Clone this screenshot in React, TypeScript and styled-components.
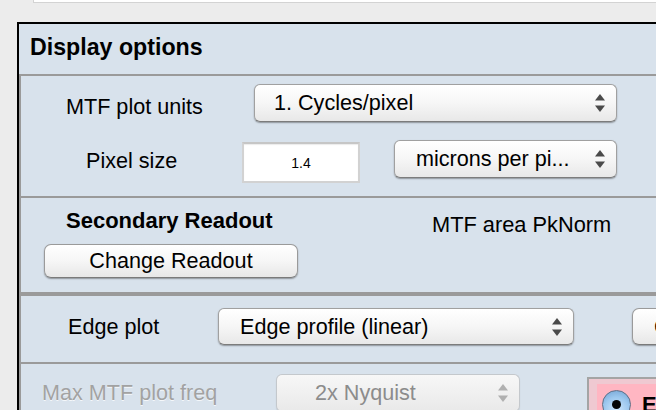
import React from "react";
import styled, { createGlobalStyle } from "styled-components";

const GlobalStyle = createGlobalStyle`
  html, body { margin: 0; padding: 0; background: #ececec; overflow: hidden; }
  body { font-family: "Liberation Sans", Arial, Helvetica, sans-serif; color: #000; }
`;

const Page = styled.div`
  width: 656px;
  height: 410px;
  overflow: hidden;
  background: #ececec;
  display: flex;
  flex-direction: column;
`;

const TopBox = styled.div`
  flex-shrink: 0;
  margin-left: 33px;
  width: 700px;
  height: 2px;
  background: #ffffff;
  border-left: 1px solid #d3d3d3;
  border-bottom: 1px solid #d3d3d3;
`;

const Panel = styled.div`
  flex: 1;
  margin-top: 19px;
  margin-left: 17px;
  width: 700px;
  background: #d8e2ec;
  border-top: 2px solid #000;
  border-left: 2px solid #000;
  display: flex;
  flex-direction: column;
`;

const TitleBar = styled.div`
  box-sizing: border-box;
  height: 50px;
  padding: 10px 0 0 11px;
  font-size: 23.2px;
  line-height: 26px;
  font-weight: bold;
`;

const Sections = styled.div`
  flex: 1;
  border-left: 2px solid #9a9a9a;
  display: flex;
  flex-direction: column;
`;

const Section = styled.div<{ $top: number; $h?: number }>`
  border-top: ${(p) => p.$top}px solid #9a9a9a;
  ${(p) => (p.$h ? `height: ${p.$h}px;` : "flex: 1;")}
  display: flex;
  flex-direction: column;
`;

const Row = styled.div<{ $mt: number; $h: number; $align?: string }>`
  display: flex;
  align-items: ${(p) => p.$align || "center"};
  margin-top: ${(p) => p.$mt}px;
  height: ${(p) => p.$h}px;
  flex-shrink: 0;
`;

const Label = styled.div<{ $w: number; $pl: number; $mt?: number; $disabled?: boolean }>`
  box-sizing: border-box;
  flex-shrink: 0;
  width: ${(p) => p.$w}px;
  padding-left: ${(p) => p.$pl}px;
  ${(p) => (p.$mt !== undefined ? `align-self: flex-start; margin-top: ${p.$mt}px;` : "")}
  font-size: 21.6px;
  line-height: 24px;
  white-space: nowrap;
  color: ${(p) => (p.$disabled ? "#a2a2a2" : "#000")};
  text-shadow: ${(p) => (p.$disabled ? "0 1px 0 #f4f7fa" : "none")};
`;

const PopupBox = styled.div<{ $w: number; $h: number; $pl: number; $disabled?: boolean; $ml?: number; $mt?: number }>`
  box-sizing: border-box;
  flex-shrink: 0;
  width: ${(p) => p.$w}px;
  height: ${(p) => p.$h}px;
  margin-left: ${(p) => p.$ml || 0}px;
  ${(p) => (p.$mt !== undefined ? `align-self: flex-start; margin-top: ${p.$mt}px;` : "")}
  display: flex;
  align-items: center;
  padding-left: ${(p) => p.$pl}px;
  padding-right: 11px;
  border: 1px solid ${(p) => (p.$disabled ? "#c4c8cc" : "#a0a0a0")};
  border-bottom-color: ${(p) => (p.$disabled ? "#b8bcc0" : "#7c7c7c")};
  border-radius: 6px;
  background: ${(p) =>
    p.$disabled
      ? "linear-gradient(#f7f7f7, #f0f0f0 50%, #e9e9e9)"
      : "linear-gradient(#ffffff, #f6f6f6 50%, #e8e8e8)"};
  box-shadow: ${(p) => (p.$disabled ? "0 1px 1px rgba(0,0,0,0.12)" : "0 1px 1.5px rgba(0,0,0,0.35)")};
  font-size: 21.6px;
  line-height: 24px;
  color: ${(p) => (p.$disabled ? "#8c8c8c" : "#000")};
  white-space: nowrap;
  overflow: hidden;
`;

const PopupText = styled.span`
  flex: 1;
  overflow: hidden;
`;

const Arrows = styled.svg`
  flex-shrink: 0;
  display: block;
`;

const NumberField = styled.input`
  box-sizing: border-box;
  flex-shrink: 0;
  align-self: flex-start;
  margin-top: 2px;
  width: 118px;
  height: 41px;
  background: #ffffff;
  border: 2px solid #d2d2d2;
  border-top-color: #c6c6c6;
  box-shadow: inset 0 1px 1px rgba(0, 0, 0, 0.08);
  font-family: "Liberation Sans", Arial, sans-serif;
  font-size: 14px;
  text-align: center;
  color: #000;
  padding: 0;
  outline: none;
`;

const ReadoutHead = styled.div`
  display: flex;
  align-items: flex-start;
  height: 46px;
  flex-shrink: 0;
`;

const BoldLabel = styled.div`
  box-sizing: border-box;
  width: 411px;
  padding-left: 45px;
  margin-top: 10px;
  font-size: 22px;
  line-height: 25px;
  font-weight: bold;
  white-space: nowrap;
`;

const ReadoutValue = styled.div`
  margin-top: 15px;
  font-size: 21.8px;
  line-height: 24px;
  white-space: nowrap;
`;

const PushButton = styled.div<{ $w: number; $h: number; $ml: number; $pl?: number }>`
  box-sizing: border-box;
  flex-shrink: 0;
  width: ${(p) => p.$w}px;
  height: ${(p) => p.$h}px;
  margin-left: ${(p) => p.$ml}px;
  display: flex;
  align-items: center;
  justify-content: ${(p) => (p.$pl !== undefined ? "flex-start" : "center")};
  padding-left: ${(p) => p.$pl || 0}px;
  border: 1px solid #9a9a9a;
  border-bottom-color: #7a7a7a;
  border-radius: 7px;
  background: linear-gradient(#ffffff, #f6f6f6 50%, #e7e7e7);
  box-shadow: 0 1px 1.5px rgba(0, 0, 0, 0.35);
  font-size: 21.6px;
  line-height: 24px;
  white-space: nowrap;
  overflow: hidden;
`;

const PinkBox = styled.div`
  box-sizing: border-box;
  flex-shrink: 0;
  align-self: flex-start;
  margin-top: 3px;
  margin-left: 67px;
  width: 120px;
  height: 60px;
  border: 2px solid #a4a4a4;
  background: #efc9d1;
  padding: 5px 0 0 8px;
`;

const RadioRow = styled.div`
  display: flex;
  align-items: flex-start;
  height: 60px;
  background: #ffb6c2;
  padding: 6px 0 0 5px;
  gap: 11px;
`;

const Radio = styled.div`
  box-sizing: border-box;
  flex-shrink: 0;
  width: 29px;
  height: 29px;
  border-radius: 50%;
  border: 1px solid #5d6f86;
  background: radial-gradient(circle at 50% 70%, #cfe6fb 0%, #9cc7ee 55%, #6e9fd0 100%);
  display: flex;
  align-items: center;
  justify-content: center;
`;

const RadioDot = styled.div`
  width: 9px;
  height: 9px;
  border-radius: 50%;
  background: #050505;
`;

const RadioText = styled.div`
  font-size: 22px;
  line-height: 26px;
  font-weight: bold;
  margin-top: 2px;
`;

function UpDown({ color }: { color: string }) {
  return (
    <Arrows width="10" height="18" viewBox="0 0 10 18">
      <polygon points="0,6.5 5,0 10,6.5" fill={color} />
      <polygon points="0,11.5 10,11.5 5,18" fill={color} />
    </Arrows>
  );
}

function Popup(props: {
  text: string;
  w: number;
  h: number;
  pl: number;
  ml?: number;
  mt?: number;
  disabled?: boolean;
}) {
  return (
    <PopupBox
      $w={props.w}
      $h={props.h}
      $pl={props.pl}
      $ml={props.ml}
      $mt={props.mt}
      $disabled={props.disabled}
    >
      <PopupText>{props.text}</PopupText>
      <UpDown color={props.disabled ? "#b0b0b0" : "#4a4a4a"} />
    </PopupBox>
  );
}

export default function App() {
  return (
    <>
      <GlobalStyle />
      <Page>
        <TopBox />
        <Panel>
          <TitleBar>Display options</TitleBar>
          <Sections>
            <Section $top={2} $h={120}>
              <Row $mt={8} $h={38}>
                <Label $w={233} $pl={45} $mt={11}>MTF plot units</Label>
                <Popup text="1. Cycles/pixel" w={363} h={38} pl={19} />
              </Row>
              <Row $mt={18} $h={43} $align="flex-start">
                <Label $w={221} $pl={65} $mt={9}>Pixel size</Label>
                <NumberField readOnly value="1.4" />
                <Popup text="microns per pi..." w={223} h={38} pl={21} ml={34} mt={0} />
              </Row>
            </Section>
            <Section $top={2} $h={94}>
              <ReadoutHead>
                <BoldLabel>Secondary Readout</BoldLabel>
                <ReadoutValue>MTF area PkNorm</ReadoutValue>
              </ReadoutHead>
              <PushButton $w={254} $h={34} $ml={23}>Change Readout</PushButton>
            </Section>
            <Section $top={4} $h={66}>
              <Row $mt={12} $h={37}>
                <Label $w={197} $pl={47}>Edge plot</Label>
                <Popup text="Edge profile (linear)" w={356} h={37} pl={21} />
                <PushButton $w={120} $h={37} $ml={58} $pl={21}>Change</PushButton>
              </Row>
            </Section>
            <Section $top={2}>
              <Row $mt={10} $h={38} $align="flex-start">
                <Label $w={255} $pl={21} $mt={7} $disabled>Max MTF plot freq</Label>
                <Popup text="2x Nyquist" w={244} h={38} pl={38} mt={0} disabled />
                <PinkBox>
                  <RadioRow>
                    <Radio>
                      <RadioDot />
                    </Radio>
                    <RadioText>Edge</RadioText>
                  </RadioRow>
                </PinkBox>
              </Row>
            </Section>
          </Sections>
        </Panel>
      </Page>
    </>
  );
}
